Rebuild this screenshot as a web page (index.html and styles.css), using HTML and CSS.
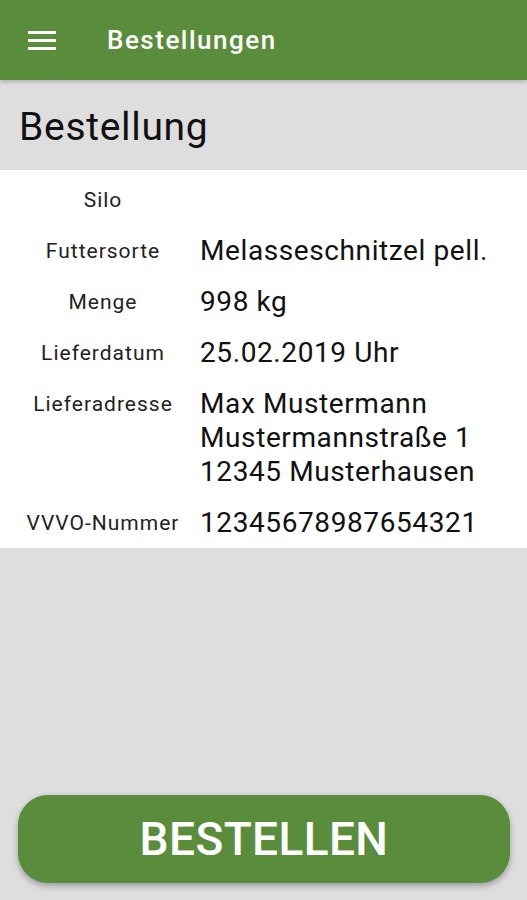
FILE: index.html
```html
<!DOCTYPE html>
<html lang="de">
<head>
    <meta charset="UTF-8">
    <meta name="viewport" content="width=device-width, initial-scale=1.0">
    <title>Bestellungen</title>
    <link rel="stylesheet" href="styles.css">
</head>
<body>
    <header class="topbar">
        <svg class="menu-icon" width="28" height="20" viewBox="0 0 28 20">
            <rect x="0" y="1" width="28" height="3" fill="#fff"/>
            <rect x="0" y="9" width="28" height="3" fill="#fff"/>
            <rect x="0" y="17" width="28" height="3" fill="#fff"/>
        </svg>
        <span class="topbar-title">Bestellungen</span>
    </header>

    <h1 class="page-title">Bestellung</h1>

    <div class="details">
        <div class="row"><span class="label">Silo</span><span class="value"></span></div>
        <div class="row"><span class="label">Futtersorte</span><span class="value">Melasseschnitzel pell.</span></div>
        <div class="row"><span class="label">Menge</span><span class="value">998 kg</span></div>
        <div class="row"><span class="label">Lieferdatum</span><span class="value">25.02.2019 Uhr</span></div>
        <div class="row"><span class="label">Lieferadresse</span><span class="value">Max Mustermann<br>Mustermannstraße 1<br>12345 Musterhausen</span></div>
        <div class="row"><span class="label">VVVO-Nummer</span><span class="value">12345678987654321</span></div>
    </div>

    <div class="spacer"></div>

    <button type="button" class="order-btn">BESTELLEN</button>
</body>
</html>
```

FILE: styles.css
```css
html, body {height: 100%}
body {margin: 0; font-family: Roboto, "Noto Sans", sans-serif; background-color: #dedede; color: #111111; display: flex; flex-direction: column}
.topbar {height: 80px; background-color: #5a8d3b; display: flex; align-items: center; flex-shrink: 0; box-shadow: 0 2px 4px rgba(0,0,0,0.2)}
.menu-icon {margin-left: 28px; margin-right: 51px}
.topbar-title {color: #ffffff; font-size: 26px; font-weight: 500; letter-spacing: 1.5px}
.page-title {margin: 0; height: 90px; box-sizing: border-box; padding: 24px 0 0 19px; font-size: 39px; font-weight: 400; letter-spacing: 0.7px; color: #111111}
.details {background-color: #ffffff; padding: 13px 0 8px 0}
.row {display: flex; align-items: flex-start; margin-bottom: 17px}
.row:last-child {margin-bottom: 0}
.label {width: 206px; flex-shrink: 0; text-align: center; font-size: 21px; letter-spacing: 1px; line-height: 34px; color: #222222}
.value {font-size: 28px; letter-spacing: 0.6px; line-height: 34px; color: #111111; margin-left: -6px}
.spacer {flex: 1}
.order-btn {margin: 0 17px 17px 18px; height: 88px; border: none; border-radius: 30px; background-color: #5a8d3b; color: #ffffff; font-family: Roboto, sans-serif; font-size: 46px; font-weight: 500; letter-spacing: 0.4px; box-shadow: 0 3px 6px rgba(0,0,0,0.3); cursor: pointer}
```
